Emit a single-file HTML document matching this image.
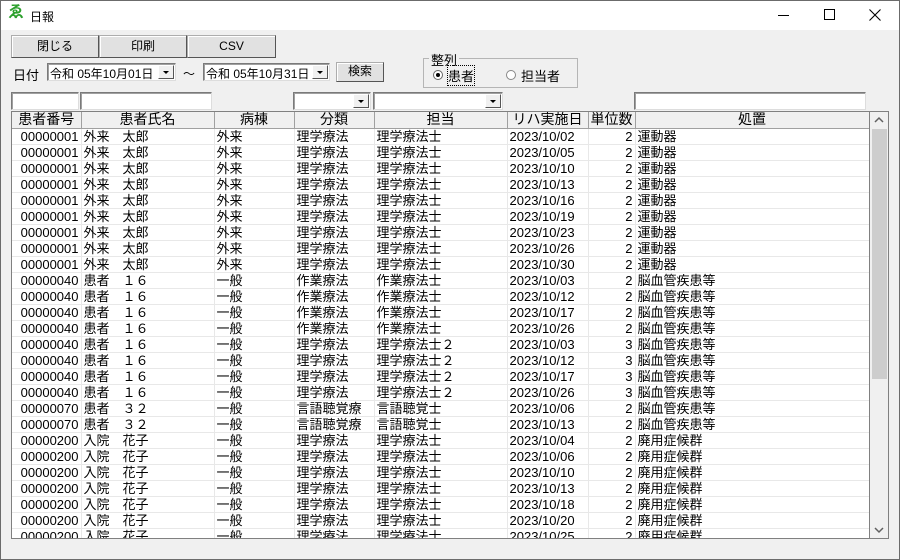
<!DOCTYPE html>
<html><head><meta charset="utf-8"><style>
*{box-sizing:border-box;margin:0;padding:0}
body{width:900px;height:560px;overflow:hidden;background:#f0f0f0;font-family:"Liberation Sans","Noto Sans CJK JP",sans-serif;font-size:12px;color:#000;position:relative}
.a{position:absolute}
#title{position:absolute;left:0;top:0;width:900px;height:30px;background:#fff}
.btn{position:absolute;background:#e1e1e1;border:1px solid #adadad;border-right-color:#555;border-bottom-color:#555;box-shadow:inset 1px 1px #fff;text-align:center;line-height:20px}
.tb{position:absolute;background:#fff;border:1px solid #7a7a7a;border-right-color:#ddd;border-bottom-color:#ddd;box-shadow:inset 1px 1px #a0a0a0;height:18px}
.dd{position:absolute;right:1px;top:1px;width:16px;height:14px;background:#f0f0f0;border:1px solid #fff;border-right-color:#555;border-bottom-color:#555}
.dd:after{content:"";position:absolute;left:4px;top:5px;border-left:3px solid transparent;border-right:3px solid transparent;border-top:3px solid #000}
#grid{position:absolute;left:11px;top:111px;width:878px;height:428px;border:1px solid #808080;background:#fff;overflow:hidden}
table{border-collapse:collapse;table-layout:fixed;position:absolute;left:0;top:0;font-size:13px}
td{height:16px;line-height:15px;border-right:1px solid #e8e8e8;border-bottom:1px solid #e8e8e8;white-space:pre;overflow:hidden;padding:0 2px}
th{height:16px;font-weight:normal;background:#f0f0f0;border-right:1px solid #a0a0a0;border-bottom:1px solid #a0a0a0;font-size:14px;line-height:15px}
.r{text-align:right}
#sb{position:absolute;left:857px;top:0;width:19px;height:426px;background:#f0f0f0;border-left:1px solid #808080}
</style></head><body>
<div id="title">
<div class="a" style="left:8px;top:4px;color:#2ca02c;font-weight:bold;font-size:16px;line-height:18px">ゑ</div>
<div class="a" style="left:30px;top:8px">日報</div>
<div class="a" style="left:778px;top:15px;width:11px;height:1px;background:#000"></div>
<div class="a" style="left:824px;top:9px;width:11px;height:11px;border:1px solid #000"></div>
<svg class="a" style="left:869px;top:9px" width="12" height="12"><path d="M0.5 0.5L11.5 11.5M11.5 0.5L0.5 11.5" stroke="#000" stroke-width="1.1"/></svg>
</div>
<div class="a" style="left:0;top:0;width:900px;height:560px;border:1px solid #6b6b6b"></div>
<div class="btn" style="left:11px;top:35px;width:88px;height:23px">閉じる</div>
<div class="btn" style="left:99px;top:35px;width:88px;height:23px">印刷</div>
<div class="btn" style="left:187px;top:35px;width:89px;height:23px">CSV</div>
<div class="a" style="left:13px;top:65px;font-size:13px">日付</div>
<div class="tb" style="left:47px;top:63px;width:129px"><span class="a" style="left:2px;top:1px">令和 05年10月01日</span><div class="dd"></div></div>
<div class="a" style="left:183px;top:65px">～</div>
<div class="tb" style="left:203px;top:63px;width:127px"><span class="a" style="left:2px;top:1px">令和 05年10月31日</span><div class="dd"></div></div>
<div class="btn" style="left:336px;top:62px;width:48px;height:20px;line-height:17px">検索</div>
<div class="a" style="left:423px;top:58px;width:155px;height:30px;border:1px solid #b5b5b5"></div>
<div class="a" style="left:429px;top:50px;background:#f0f0f0;padding:0 2px;font-size:13px">整列</div>
<div class="a" style="left:433px;top:70px;width:10px;height:10px;border:1px solid #666;border-radius:50%;background:#fff"><div class="a" style="left:2px;top:2px;width:4px;height:4px;background:#000;border-radius:50%"></div></div>
<div class="a" style="left:448px;top:66px;font-size:13px;outline:1px dotted #000">患者</div>
<div class="a" style="left:506px;top:70px;width:10px;height:10px;border:1px solid #888;border-radius:50%;background:#fff"></div>
<div class="a" style="left:521px;top:66px;font-size:13px">担当者</div>
<div class="tb" style="left:11px;top:92px;width:68px"></div>
<div class="tb" style="left:80px;top:92px;width:132px"></div>
<div class="tb" style="left:293px;top:92px;width:78px"><div class="dd"></div></div>
<div class="tb" style="left:373px;top:92px;width:130px"><div class="dd"></div></div>
<div class="tb" style="left:634px;top:92px;width:232px"></div>
<div id="grid">
<table>
<colgroup><col style="width:69px"><col style="width:133px"><col style="width:80px"><col style="width:80px"><col style="width:133px"><col style="width:81px"><col style="width:47px"><col style="width:234px"></colgroup>
<tr><th>患者番号</th><th>患者氏名</th><th>病棟</th><th>分類</th><th>担当</th><th>リハ実施日</th><th>単位数</th><th>処置</th></tr>
<tr><td class="r">00000001</td><td>外来　太郎</td><td>外来</td><td>理学療法</td><td>理学療法士</td><td>2023/10/02</td><td class="r">2</td><td>運動器</td></tr>
<tr><td class="r">00000001</td><td>外来　太郎</td><td>外来</td><td>理学療法</td><td>理学療法士</td><td>2023/10/05</td><td class="r">2</td><td>運動器</td></tr>
<tr><td class="r">00000001</td><td>外来　太郎</td><td>外来</td><td>理学療法</td><td>理学療法士</td><td>2023/10/10</td><td class="r">2</td><td>運動器</td></tr>
<tr><td class="r">00000001</td><td>外来　太郎</td><td>外来</td><td>理学療法</td><td>理学療法士</td><td>2023/10/13</td><td class="r">2</td><td>運動器</td></tr>
<tr><td class="r">00000001</td><td>外来　太郎</td><td>外来</td><td>理学療法</td><td>理学療法士</td><td>2023/10/16</td><td class="r">2</td><td>運動器</td></tr>
<tr><td class="r">00000001</td><td>外来　太郎</td><td>外来</td><td>理学療法</td><td>理学療法士</td><td>2023/10/19</td><td class="r">2</td><td>運動器</td></tr>
<tr><td class="r">00000001</td><td>外来　太郎</td><td>外来</td><td>理学療法</td><td>理学療法士</td><td>2023/10/23</td><td class="r">2</td><td>運動器</td></tr>
<tr><td class="r">00000001</td><td>外来　太郎</td><td>外来</td><td>理学療法</td><td>理学療法士</td><td>2023/10/26</td><td class="r">2</td><td>運動器</td></tr>
<tr><td class="r">00000001</td><td>外来　太郎</td><td>外来</td><td>理学療法</td><td>理学療法士</td><td>2023/10/30</td><td class="r">2</td><td>運動器</td></tr>
<tr><td class="r">00000040</td><td>患者　１６</td><td>一般</td><td>作業療法</td><td>作業療法士</td><td>2023/10/03</td><td class="r">2</td><td>脳血管疾患等</td></tr>
<tr><td class="r">00000040</td><td>患者　１６</td><td>一般</td><td>作業療法</td><td>作業療法士</td><td>2023/10/12</td><td class="r">2</td><td>脳血管疾患等</td></tr>
<tr><td class="r">00000040</td><td>患者　１６</td><td>一般</td><td>作業療法</td><td>作業療法士</td><td>2023/10/17</td><td class="r">2</td><td>脳血管疾患等</td></tr>
<tr><td class="r">00000040</td><td>患者　１６</td><td>一般</td><td>作業療法</td><td>作業療法士</td><td>2023/10/26</td><td class="r">2</td><td>脳血管疾患等</td></tr>
<tr><td class="r">00000040</td><td>患者　１６</td><td>一般</td><td>理学療法</td><td>理学療法士２</td><td>2023/10/03</td><td class="r">3</td><td>脳血管疾患等</td></tr>
<tr><td class="r">00000040</td><td>患者　１６</td><td>一般</td><td>理学療法</td><td>理学療法士２</td><td>2023/10/12</td><td class="r">3</td><td>脳血管疾患等</td></tr>
<tr><td class="r">00000040</td><td>患者　１６</td><td>一般</td><td>理学療法</td><td>理学療法士２</td><td>2023/10/17</td><td class="r">3</td><td>脳血管疾患等</td></tr>
<tr><td class="r">00000040</td><td>患者　１６</td><td>一般</td><td>理学療法</td><td>理学療法士２</td><td>2023/10/26</td><td class="r">3</td><td>脳血管疾患等</td></tr>
<tr><td class="r">00000070</td><td>患者　３２</td><td>一般</td><td>言語聴覚療</td><td>言語聴覚士</td><td>2023/10/06</td><td class="r">2</td><td>脳血管疾患等</td></tr>
<tr><td class="r">00000070</td><td>患者　３２</td><td>一般</td><td>言語聴覚療</td><td>言語聴覚士</td><td>2023/10/13</td><td class="r">2</td><td>脳血管疾患等</td></tr>
<tr><td class="r">00000200</td><td>入院　花子</td><td>一般</td><td>理学療法</td><td>理学療法士</td><td>2023/10/04</td><td class="r">2</td><td>廃用症候群</td></tr>
<tr><td class="r">00000200</td><td>入院　花子</td><td>一般</td><td>理学療法</td><td>理学療法士</td><td>2023/10/06</td><td class="r">2</td><td>廃用症候群</td></tr>
<tr><td class="r">00000200</td><td>入院　花子</td><td>一般</td><td>理学療法</td><td>理学療法士</td><td>2023/10/10</td><td class="r">2</td><td>廃用症候群</td></tr>
<tr><td class="r">00000200</td><td>入院　花子</td><td>一般</td><td>理学療法</td><td>理学療法士</td><td>2023/10/13</td><td class="r">2</td><td>廃用症候群</td></tr>
<tr><td class="r">00000200</td><td>入院　花子</td><td>一般</td><td>理学療法</td><td>理学療法士</td><td>2023/10/18</td><td class="r">2</td><td>廃用症候群</td></tr>
<tr><td class="r">00000200</td><td>入院　花子</td><td>一般</td><td>理学療法</td><td>理学療法士</td><td>2023/10/20</td><td class="r">2</td><td>廃用症候群</td></tr>
<tr><td class="r">00000200</td><td>入院　花子</td><td>一般</td><td>理学療法</td><td>理学療法士</td><td>2023/10/25</td><td class="r">2</td><td>廃用症候群</td></tr>
</table>
<div id="sb">
<svg class="a" style="left:4px;top:4px" width="10" height="8"><path d="M1 6L5 2L9 6" stroke="#606060" stroke-width="1.5" fill="none"/></svg>
<div class="a" style="left:2px;top:17px;width:15px;height:250px;background:#cdcdcd"></div>
<svg class="a" style="left:4px;top:414px" width="10" height="8"><path d="M1 2L5 6L9 2" stroke="#606060" stroke-width="1.5" fill="none"/></svg>
</div>
</div>
</body></html>
